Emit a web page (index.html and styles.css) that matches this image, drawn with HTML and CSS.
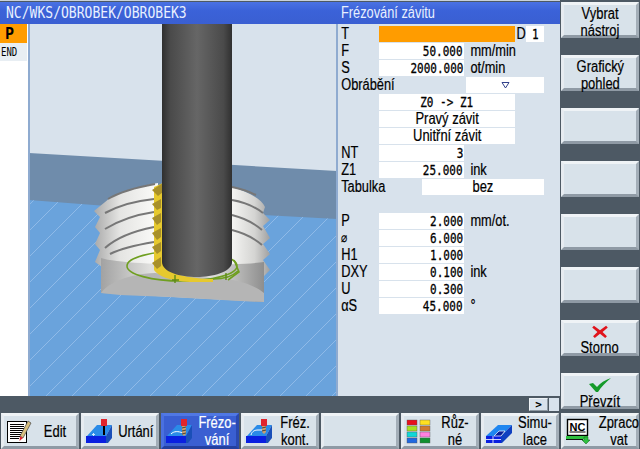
FILE: index.html
```html
<!DOCTYPE html>
<html lang="cs">
<head>
<meta charset="utf-8">
<title>Frézování závitu</title>
<link rel="stylesheet" href="styles.css">
</head>
<body>
<div class="screen">
  <div class="main">
    <div class="titles">
      <div class="title title-path"><span class="mono-title">NC/WKS/OBROBEK/OBROBEK3</span></div>
      <div class="title title-form"><span class="form-title">Frézování závitu</span></div>
    </div>
    <div class="work">
      <div class="steps">
        <div class="step step-on">P</div>
        <div class="step step-end"><span class="end">END</span></div>
      </div>
      <svg class="scene" viewBox="28 24 310 372" width="310" height="372" xmlns="http://www.w3.org/2000/svg">
        <defs>
          <pattern id="hatch" width="26" height="26" patternUnits="userSpaceOnUse">
            <path d="M-2 28L28 -2" stroke="#8fbae8" stroke-width="1"/>
          </pattern>
          <linearGradient id="tool" x1="0" x2="1" y1="0" y2="0">
            <stop offset="0" stop-color="#2f2f2f"/>
            <stop offset=".12" stop-color="#4a4a4a"/>
            <stop offset=".5" stop-color="#666"/>
            <stop offset=".88" stop-color="#4a4a4a"/>
            <stop offset="1" stop-color="#303030"/>
          </linearGradient>
          <linearGradient id="bossL" x1="0" x2="1" y1="0" y2="0">
            <stop offset="0" stop-color="#a9a9a9"/>
            <stop offset=".4" stop-color="#e4e4e2"/>
            <stop offset="1" stop-color="#fbfbf9"/>
          </linearGradient>
          <linearGradient id="bossR" x1="0" x2="1" y1="0" y2="0">
            <stop offset="0" stop-color="#f4f4f2"/>
            <stop offset=".6" stop-color="#d4d4d2"/>
            <stop offset="1" stop-color="#a0a0a0"/>
          </linearGradient>
          <linearGradient id="cyl" x1="0" x2="1" y1="0" y2="0">
            <stop offset="0" stop-color="#a2a2a2"/>
            <stop offset=".3" stop-color="#dfdfdd"/>
            <stop offset=".7" stop-color="#dcdcda"/>
            <stop offset="1" stop-color="#8e8e8e"/>
          </linearGradient>
        </defs>
        <rect x="28" y="24" width="310" height="372" fill="#d8e2ec"/>
        <path d="M29 153L337 171V230H29Z" fill="#6f8cab"/>
        <path d="M29 200L120 207L337 219V396H29Z" fill="#6aa3dc"/>
        <path d="M29 200L120 207L337 219V396H29Z" fill="url(#hatch)"/>
        <rect x="28" y="24" width="2" height="372" fill="#8fabd0"/>
        <rect x="336" y="24" width="2" height="372" fill="#8fabd0"/>

        <!-- left threads -->
        <path d="M94 211L110 198C122 191 140 186 158 183V267H102L95 262L100 250L95 244L100 233L95 227L100 217Z" fill="url(#bossL)"/>
        <g fill="none" stroke="#777" stroke-width="2">
          <path d="M108 199C120 192 138 187 155 184"/>
          <path d="M105 213C118 206 134 201 154 199"/>
          <path d="M105 229C118 221 134 215 154 212"/>
          <path d="M105 248C116 238 134 231 154 227"/>
          <path d="M110 254C122 248 136 245 154 242"/>
        </g>
        <!-- right threads -->
        <path d="M232 187C248 192 262 199 265 207L263 213L270 220L263 226L270 238L263 244L270 254L263 260L270 270L264 276H232Z" fill="url(#bossR)"/>
        <g fill="none" stroke="#777" stroke-width="2">
          <path d="M232 187C242 189 250 192 256 195"/>
          <path d="M232 200C244 202 254 206 263 213"/>
          <path d="M232 215C244 218 254 223 262 230"/>
          <path d="M232 230C244 233 254 238 262 245"/>
        </g>

        <!-- cylinder body -->
        <path d="M101 258C125 266 240 266 264 262V302L101 293Z" fill="url(#cyl)"/>
        <path d="M101 293C108 283 128 274 155 273L210 278C235 278 255 285 264 293V302L240 301L170 297L120 295Z" fill="#b5b5b5"/>

        <!-- green path, behind the tool -->
        <ellipse cx="182" cy="266" rx="55" ry="15" fill="none" stroke="#6f9f20" stroke-width="1.6"/>

        <!-- yellow insert -->
        <path d="M163 183V265C170 274 190 279 213 279V282H190C170 281 158 276 154 270V187Z" fill="#e6c92e"/>
        <g fill="#a8902a">
          <path d="M152 190L163 183V192L158 196Z"/>
          <path d="M152 204L161 199V208L157 210Z"/>
          <path d="M152 218L161 213V222L157 225Z"/>
          <path d="M152 233L161 228V237L157 240Z"/>
          <path d="M152 247L161 242V251L157 254Z"/>
          <path d="M152 263L161 257V266L157 269Z"/>
        </g>

        <!-- tool -->
        <path d="M162 24H232V262C232 272 212 277 197 277C180 277 162 272 162 262Z" fill="url(#tool)"/>
        <path d="M213 279C222 279 232 277 238 271" fill="none" stroke="#6f9f20" stroke-width="1.6"/>
        <path d="M234 260L239 272L228 280" fill="none" stroke="#6f9f20" stroke-width="1.6"/>
        <path d="M175 275V283M172 280H179M226 273V280" stroke="#5d8a18" stroke-width="1.4"/>
      </svg>
      <form class="form">
        <span class="lab">T</span><span class="fld span-t"></span><span class="d-lab">D</span><span class="fld d-val"><span class="n">1</span></span>
        <span class="lab">F</span><span class="fld val"><span class="n">50.000</span></span><span class="unit">mm/min</span>
        <span class="lab">S</span><span class="fld val"><span class="n">2000.000</span></span><span class="unit">ot/min</span>
        <span class="lab lab-wide">Obrábění</span><span class="fld span-obr"><svg class="tri" width="9" height="8" viewBox="0 0 9 8"><path d="M1 1.5H8L4.500 7Z" fill="#fff" stroke="#31408a"/></svg></span>
        <span class="fld span-mid"><span class="n n-mid">Z0 -&gt; Z1</span></span>
        <span class="fld span-mid"><span class="t">Pravý závit</span></span>
        <span class="fld span-mid"><span class="t">Unitřní závit</span></span>
        <span class="lab">NT</span><span class="fld val"><span class="n">3</span></span>
        <span class="lab">Z1</span><span class="fld val"><span class="n">25.000</span></span><span class="unit">ink</span>
        <span class="lab lab-tab">Tabulka</span><span class="fld span-tab"><span class="t">bez</span></span>
        <span class="blank"></span>
        <span class="lab">P</span><span class="fld val"><span class="n">2.000</span></span><span class="unit">mm/ot.</span>
        <span class="lab lab-sym">⌀</span><span class="fld val"><span class="n">6.000</span></span>
        <span class="lab">H1</span><span class="fld val"><span class="n">1.000</span></span>
        <span class="lab">DXY</span><span class="fld val"><span class="n">0.100</span></span><span class="unit">ink</span>
        <span class="lab">U</span><span class="fld val"><span class="n">0.300</span></span>
        <span class="lab">αS</span><span class="fld val"><span class="n">45.000</span></span><span class="unit">°</span>
      </form>
    </div>
    <div class="status">
      <span class="more">&gt;</span>
      <span class="more-box"></span>
    </div>
  </div>

  <div class="side">
    <div class="key"><span class="t">Vybrat<br>nástroj</span></div>
    <div class="key"><span class="t">Grafický<br>pohled</span></div>
    <div class="key"></div>
    <div class="key"></div>
    <div class="key"></div>
    <div class="key"></div>
    <div class="key key-icon">
      <svg width="16" height="13" viewBox="0 0 18 15"><path d="M2 1L9 6L16 1L18 3L12 8L17 13L15 15L9 10L3 15L1 13L6 8L0 3Z" fill="#e0141c"/></svg>
      <span class="t">Storno</span>
    </div>
    <div class="key key-icon">
      <svg width="22" height="14" viewBox="0 0 22 14"><path d="M0 6L4 5L8 9C11 5 16 2 22 0C17 4 12 9 9 14H7Z" fill="#159a2a"/></svg>
      <span class="t">Převzít</span>
    </div>
  </div>

  <div class="bottom">
    <div class="key bkey">
      <svg class="ico" width="30" height="30" viewBox="0 0 30 30">
        <rect x="3.500" y="5.500" width="19" height="21" fill="#fff" stroke="#000"/>
        <path d="M6 8.500H20M6 10.500H20M6 12.500H20M6 14.500H20M6 16.500H20M6 18.500H18M6 20.500H16M6 22.500H15" stroke="#000"/>
        <path d="M24 5L27 7L19 22L16 20Z" fill="#d8c080" stroke="#444" stroke-width=".7"/>
        <path d="M16 20L19 22L15.500 25Z" fill="#e0242c"/>
      </svg>
      <span class="txt">Edit</span>
    </div>
    <div class="key bkey">
      <svg class="ico" width="30" height="30" viewBox="0 0 30 30">
        <path d="M3 20L13 9H28L22 20Z" fill="#2a8be8"/>
        <path d="M2 20H22V27H2Z" fill="#0a1fe0"/>
        <path d="M22 20L28 9V22L24 27H22Z" fill="#1a4fb8"/>
        <path d="M8 18.500H11M9.500 17V20" stroke="#cfe6ff"/>
        <rect x="17" y="3" width="6" height="7" fill="#e0242c"/>
        <rect x="19" y="10" width="2" height="9" fill="#000"/>
      </svg>
      <span class="txt">Urtání</span>
    </div>
    <div class="key bkey bkey-on">
      <svg class="ico" width="30" height="30" viewBox="0 0 30 30">
        <path d="M3 20L13 9H28L22 20Z" fill="#2a8be8"/>
        <path d="M2 20H22V27H2Z" fill="#0a1fe0"/>
        <path d="M22 20L28 9V22L24 27H22Z" fill="#1a4fb8"/>
        <path d="M7 18C10 15 14 15 19 17" fill="none" stroke="#fff"/>
        <rect x="17" y="3" width="6" height="7" fill="#e0242c"/>
        <path d="M18 10H22V18L20 20L18 18Z" fill="#c8a070"/>
        <path d="M18 12L22 11M18 15L22 14M18 18L22 17" stroke="#444"/>
      </svg>
      <span class="txt">Frézo-<br>vání</span>
    </div>
    <div class="key bkey">
      <svg class="ico" width="30" height="30" viewBox="0 0 30 30">
        <path d="M3 20L13 9H28L22 20Z" fill="#2a8be8"/>
        <path d="M2 20H22V27H2Z" fill="#0a1fe0"/>
        <path d="M22 20L28 9V22L24 27H22Z" fill="#1a4fb8"/>
        <path d="M7 19C8 15 11 14 14 14H18" fill="none" stroke="#fff"/>
        <rect x="17" y="3" width="6" height="7" fill="#e0242c"/>
        <path d="M18 10H22V16L20 18L18 16Z" fill="#c8a070"/>
        <path d="M18 12L22 11M18 15L22 14" stroke="#444"/>
      </svg>
      <span class="txt">Fréz.<br>kont.</span>
    </div>
    <div class="key bkey"></div>
    <div class="key bkey">
      <svg class="ico" width="30" height="30" viewBox="0 0 30 30">
        <g stroke="#555" stroke-width=".4">
          <rect x="3" y="4" width="10" height="5" fill="#e8101c"/><rect x="16" y="4" width="10" height="5" fill="#ffe020"/>
          <rect x="3" y="10" width="10" height="5" fill="#a8e020"/><rect x="16" y="10" width="10" height="5" fill="#d07a30"/>
          <rect x="3" y="16" width="10" height="5" fill="#10d8d8"/><rect x="16" y="16" width="10" height="5" fill="#ff80e0"/>
          <rect x="3" y="22" width="10" height="5" fill="#2068e0"/><rect x="16" y="22" width="10" height="5" fill="#109030"/>
        </g>
      </svg>
      <span class="txt">Růz-<br>né</span>
    </div>
    <div class="key bkey">
      <svg class="ico" width="30" height="30" viewBox="0 0 30 30">
        <path d="M2 20L14 9H28L17 20Z" fill="#1f86f0"/>
        <path d="M2 20H17V27H2Z" fill="#0a1fe0"/>
        <path d="M17 20L28 9V17L18 27H17Z" fill="#0f3fc0"/>
        <path d="M10 20L15 15H21L17 20Z" fill="#0a1f9a" stroke="#fff" stroke-width=".7"/>
        <path d="M2 23.500H17M9 20V27" stroke="#fff" stroke-width=".8"/>
      </svg>
      <span class="txt">Simu-<br>lace</span>
    </div>
    <div class="key bkey">
      <svg class="ico" width="30" height="30" viewBox="0 0 30 30">
        <rect x="3.500" y="3.500" width="20" height="16" fill="#fff" stroke="#000" stroke-width="1.400"/>
        <rect x="5.500" y="15.500" width="16" height="1" fill="#000"/>
        <text x="13.500" y="14.500" class="nc">NC</text>
        <rect x="2" y="20" width="22" height="3" fill="#2fc040"/>
        <path d="M2 23.500H19" stroke="#111"/>
        <path d="M20 21H24V24H26L22 28L18 24H20Z" fill="#2fc040" stroke="#0a5a18" stroke-width=".5"/>
      </svg>
      <span class="txt">Zpraco<br>vat</span>
    </div>
  </div>
</div>
</body>
</html>
```
FILE: styles.css
```css
* { box-sizing: border-box; }
html, body { margin: 0; padding: 0; background: #4d5964; }
body { width: 640px; height: 449px; overflow: hidden; }

.screen {
  width: 640px;
  height: 449px;
  display: grid;
  grid-template-columns: 560px 80px;
  grid-template-rows: 413px 36px;
  background: #4d5964;
  font-family: "Liberation Sans", sans-serif;
  font-size: 16px;
  color: #000;
}

.main { display: flex; flex-direction: column; padding-top: 1px; border-top: 1px solid #c9d2da; }

.titles { display: flex; height: 22px; flex: none; }
.title {
  height: 22px;
  background: linear-gradient(#4a72e4, #3b62d8 40%, #3a5fd2);
  color: #e8f0ff;
  display: flex;
  align-items: center;
  padding-left: 6px;
}
.title-path { width: 338px; }
.title-form { width: 222px; padding-left: 3px; }
.mono-title {
  font-family: "DejaVu Sans Mono", monospace;
  font-size: 15px;
  transform: scaleX(.87);
  transform-origin: left center;
  white-space: nowrap;
}
.form-title {
  font-size: 16px;
  transform: scaleX(.8);
  transform-origin: left center;
  white-space: nowrap;
}

.work { display: flex; height: 372px; flex: none; }
.steps { width: 28px; flex: none; background: #fff; display: flex; flex-direction: column; }
.step { display: flex; align-items: center; width: 27px; }
.step-on {
  height: 19px;
  background: #ff9c00;
  font-family: "DejaVu Sans Mono", monospace;
  font-weight: bold;
  font-size: 15px;
  padding-left: 5px;
}
.step-end { height: 18px; background: #e8eef3; padding-left: 1px; }
.end {
  font-family: "DejaVu Sans Mono", monospace;
  font-size: 12px;
  transform: scaleX(.75);
  transform-origin: left center;
}
.scene { display: block; flex: none; }

.form {
  width: 222px;
  flex: none;
  background: #d8e2ec;
  margin: 0;
  padding-top: 2px;
  display: grid;
  grid-template-columns: 41px 43px 42px 2px 49px 2px 9px 18px 16px;
  grid-auto-rows: 16px;
  row-gap: 1px;
  align-content: start;
}
.lab, .unit, .d-lab, .fld { line-height: 16px; font-size: 16px; white-space: nowrap; }
.lab, .unit, .d-lab {
  transform: scaleX(.8);
  transform-origin: left center;
  -webkit-text-stroke: .2px #000;
}
.lab { grid-column: 1 / 2; padding-left: 4px; }
.lab-wide { grid-column: 1 / 5; }
.lab-tab { grid-column: 1 / 3; }
.lab-sym { font-size: 13px; }
.fld { background: #fff; text-align: center; display: block; }
.t {
  display: inline-block;
  white-space: nowrap;
  transform: scaleX(.81);
  transform-origin: center;
  -webkit-text-stroke: .2px currentColor;
}
.n {
  display: inline-block;
  font-family: "DejaVu Sans Mono", monospace;
  font-size: 14px;
  -webkit-text-stroke: .3px #000;
  transform: scaleX(.785);
  transform-origin: right center;
  white-space: pre;
}
.n-mid, .d-val .n { transform-origin: center; }
.val { grid-column: 2 / 4; text-align: right; padding-right: 1px; }
.unit { grid-column: 4 / 10; padding-left: 8px; }
.span-t { grid-column: 2 / 6; background: #ff9c00; }
.d-lab { grid-column: 6 / 8; padding-left: 2px; }
.d-val { grid-column: 8 / 9; }
.span-obr { grid-column: 5 / 9; display: flex; align-items: center; justify-content: center; }
.span-mid { grid-column: 2 / 6; }
.span-tab { grid-column: 3 / 9; }
.blank { grid-column: 1 / -1; }
.tri { display: block; }

.status { flex: 1; display: flex; justify-content: flex-end; align-items: flex-end; gap: 1px; padding: 0 1px 2px 0; }
.more {
  width: 19px;
  height: 13px;
  background: #d8e2ec;
  border: 1px solid;
  border-color: #eef2f6 #8f9aa3 #8f9aa3 #eef2f6;
  font-family: "DejaVu Sans Mono", monospace;
  font-weight: bold;
  font-size: 11px;
  line-height: 11px;
  text-align: center;
}
.more-box { width: 10px; height: 13px; background: #d8e2ec; }

.side {
  display: flex;
  flex-direction: column;
  gap: 17px;
  padding: 2px 0 0 1px;
}

.key {
  width: 78px;
  height: 36px;
  flex: none;
  background: #d8e2ea;
  border: 3px solid;
  border-color: #eff3f6 #a3aeb8 #8f9aa5 #e6ebf0;
  font-size: 16px;
  line-height: 17px;
  text-align: center;
}
.key-icon {
  display: flex;
  flex-direction: column;
  align-items: center;
  padding-top: 2px;
  line-height: 17px;
}
.key-icon svg { display: block; flex: none; margin-bottom: 1px; }

.bottom { grid-column: 1 / 3; display: flex; gap: 2px; padding-left: 1px; }
.bkey { display: flex; align-items: center; text-align: center; }
.ico { display: block; flex: none; }
.txt {
  flex: 1;
  line-height: 17px;
  white-space: nowrap;
  transform: scaleX(.81);
  transform-origin: center;
  -webkit-text-stroke: .2px currentColor;
}
.bkey-on {
  background: #3a5fd2;
  border-color: #5078e4 #2a49b0 #24409e #4a70e0;
  color: #fff;
}
.nc { font-family: "Liberation Sans", sans-serif; font-weight: bold; font-size: 11px; text-anchor: middle; stroke: none; }
```
